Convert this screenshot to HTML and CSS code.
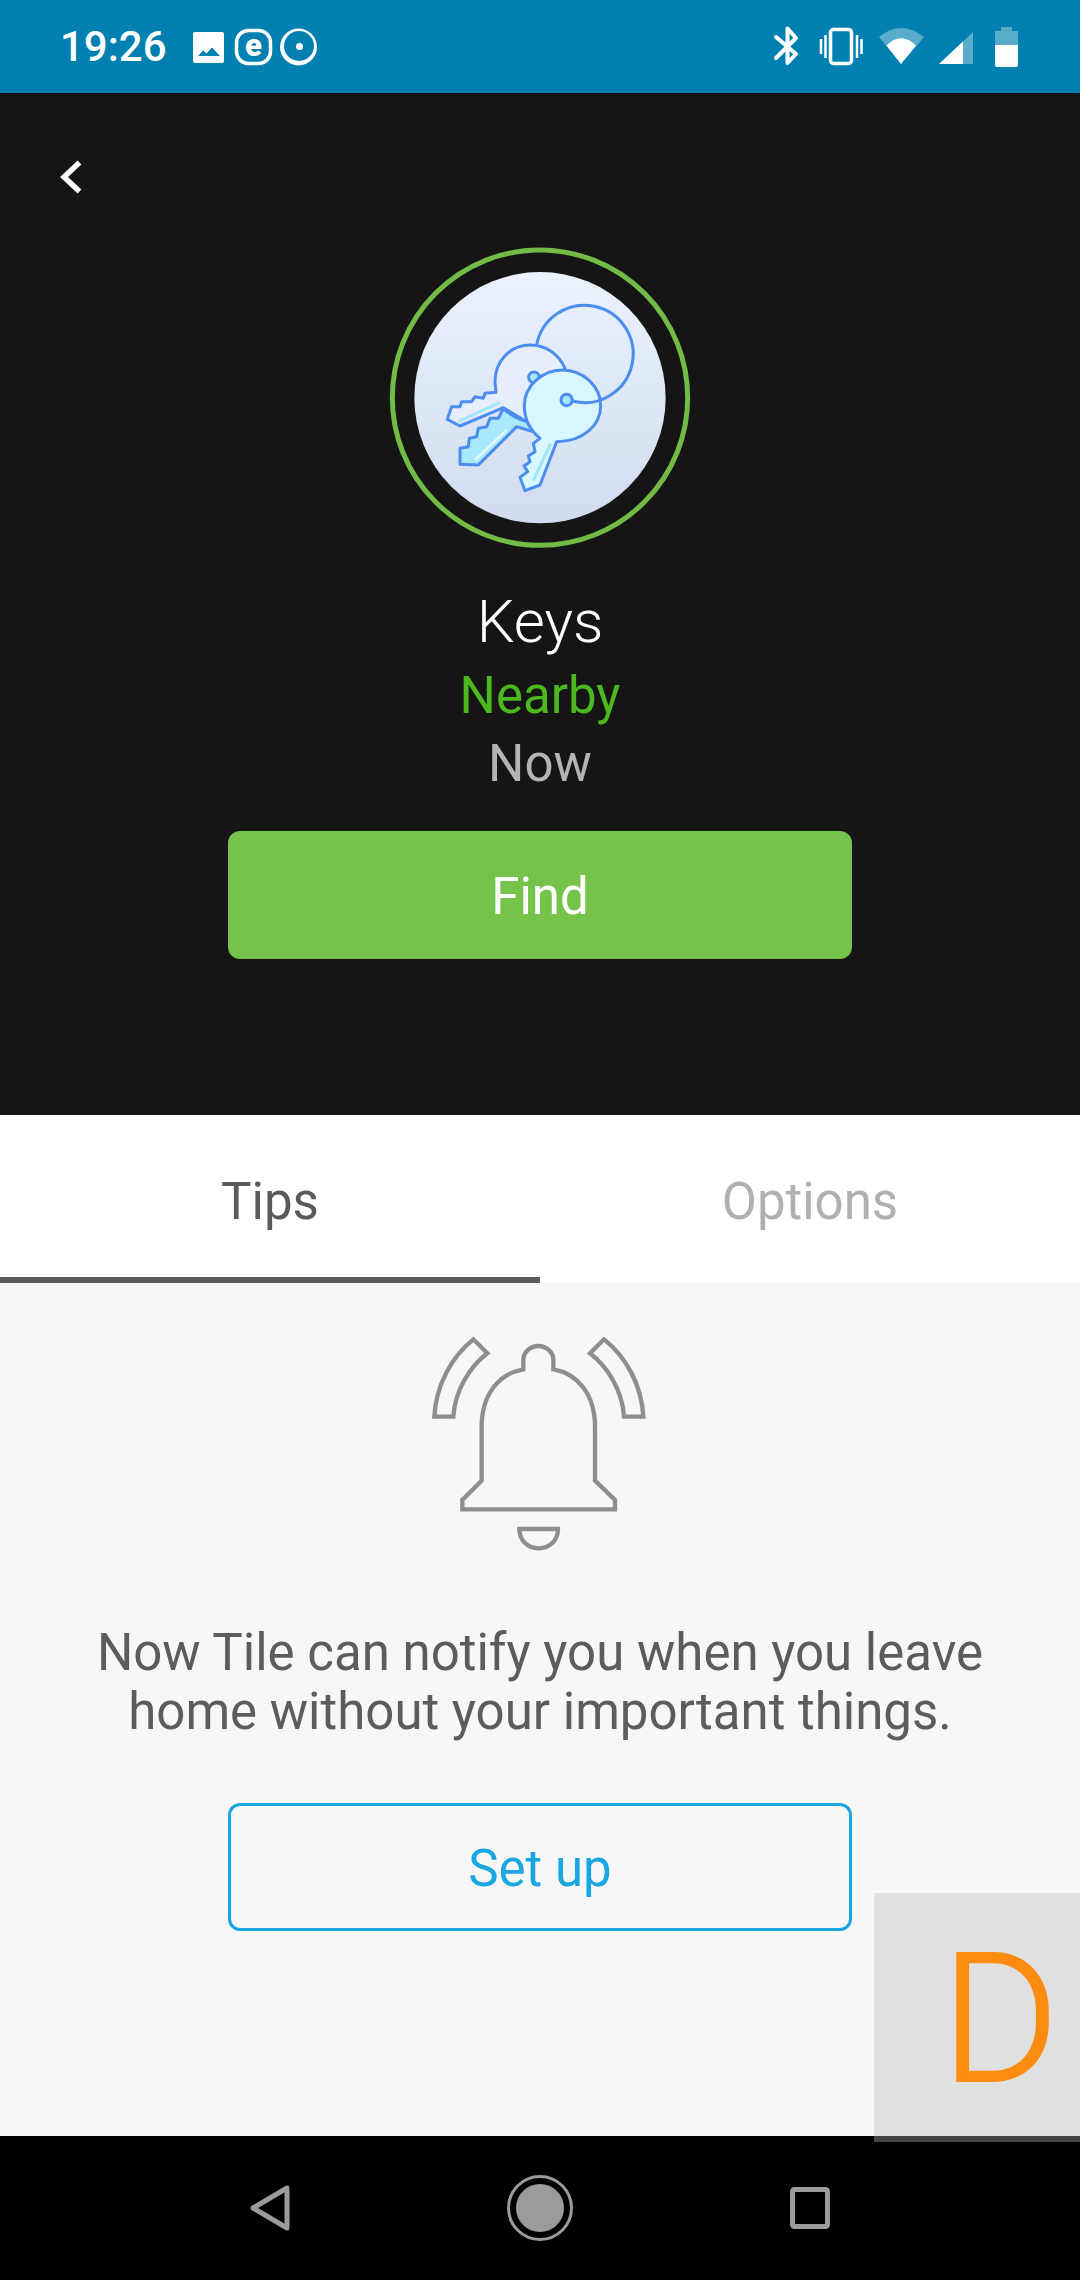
FILE: index.html
```html
<!DOCTYPE html>
<html lang="en">
<head>
  <meta charset="UTF-8">
  <title>Keys</title>
  <link rel="stylesheet" href="styles.css">
</head>

<body>
  <div class="screen">
    <!-- Android status bar -->
    <div class="status-bar">
      <div class="status-left">
        <span class="clock">19:26</span>
        <svg class="status-icons-left" viewBox="192 26 126 40" width="126" height="40">
          <rect x="192" y="31" width="31" height="31" rx="2" fill="#fff"/>
          <path d="M197 55 L202 49.5 L205.5 52.5 L211 46.5 L219 55 Z" fill="#0080b0"/>
          <rect x="235.5" y="29.5" width="34" height="33" rx="12" fill="none" stroke="#fff" stroke-width="3.5"/>
          <text class="e-glyph" x="252.5" y="55" text-anchor="middle">e</text>
          <circle cx="297.5" cy="46" r="18.5" fill="#fff"/>
          <circle cx="298" cy="45" r="15" fill="#0080b0"/>
          <circle cx="298.5" cy="45.5" r="3.5" fill="#fff"/>
        </svg>
      </div>
      <svg class="status-icons-right" viewBox="772 26 246 42" width="246" height="42">
        <path d="M775 37 L795 54 L786.5 63 V28.5 L795 38 L775 58" fill="none" stroke="#fff" stroke-width="4" stroke-linecap="round" stroke-linejoin="round"/>
        <rect x="829.5" y="29.5" width="21" height="34" rx="3" fill="none" stroke="#fff" stroke-width="3.5"/>
        <path d="M820 39 V54 M824.5 35 V58 M856 35 V58 M860.5 39 V54" fill="none" stroke="#fff" stroke-width="2.5"/>
        <path d="M878 37 Q900 19 923 37 L900 64 Z" fill="#fff" opacity="0.35"/>
        <path d="M885.5 45.5 Q900 31 915 45.5 L900 64 Z" fill="#fff"/>
        <path d="M938 64 L972 32 V64 Z" fill="#fff" opacity="0.35"/>
        <path d="M938 64 L962 41.5 V64 Z" fill="#fff"/>
        <path d="M1000 31 V27 H1011 V31 H1017 V45 H994 V31 Z" fill="#fff" opacity="0.35"/>
        <path d="M994 45 H1017 V65 Q1017 67 1015 67 H996 Q994 67 994 65 Z" fill="#fff"/>
      </svg>
    </div>

    <!-- Tile header -->
    <div class="hero">
      <svg class="back" viewBox="0 0 22 34" width="22" height="34">
        <path d="M19.5 2.5 L4 17 L19.5 31.5" fill="none" stroke="#fff" stroke-width="5.5"/>
      </svg>
      <div class="hero-center">
        <svg class="avatar" viewBox="0 0 1020 1020" width="340" height="340">
          <defs>
            <linearGradient id="disc" x1="0" y1="0" x2="0" y2="1">
              <stop offset="0" stop-color="#ebf2fe"/>
              <stop offset="1" stop-color="#d0dcef"/>
            </linearGradient>
          </defs>
          <circle cx="510" cy="503" r="443" fill="none" stroke="#72bb47" stroke-width="15"/>
          <circle cx="510" cy="503" r="377" fill="url(#disc)"/>
          <g stroke="#4c8df0" stroke-width="9" stroke-linejoin="round">
            <!-- back key -->
            <path d="M585 415 C565 370 525 345 480 345 C420 345 375 395 375 455 L378 487 L345 490 L340 505 L315 500 L305 515 L275 515 L270 530 L245 530 L232 568 L270 588 L400 533 L470 575 L560 500 Z" fill="#e6eefb"/>
            <path d="M265 575 L390 517" fill="none" stroke="#a6e6fa" stroke-width="9"/>
            <!-- middle key -->
            <path d="M400 535 L385 565 L360 565 L350 590 L325 595 L320 620 L298 625 L295 650 L270 655 L270 703 L325 705 L440 590 L495 607 L470 575 C440 565 415 550 400 535 Z" fill="#a8e8fb"/>
            <path d="M315 690 L410 600" fill="none" stroke="#dff6fd" stroke-width="9"/>
            <circle cx="492" cy="442" r="16" fill="#a8e8fb"/>
            <!-- front key -->
            <path d="M577 420 C640 420 692 470 692 527 C692 585 640 635 560 635 L510 765 L465 782 L450 742 L473 725 L462 708 L480 695 L475 678 L495 665 L490 640 L510 625 C480 600 463 565 463 527 C463 470 515 420 577 420 Z" fill="#d8f6fd"/>
            <path d="M542 640 L490 752" fill="none" stroke="#9fe8f8" stroke-width="9"/>
            <circle cx="590" cy="510" r="17" fill="#a0e6fa"/>
            <!-- ring -->
            <path d="M500 345 A146 146 0 1 1 610 514" fill="none"/>
          </g>
        </svg>
        <div class="tile-name">Keys</div>
        <div class="tile-status">Nearby</div>
        <div class="tile-time">Now</div>
        <div class="btn btn-find">Find</div>
      </div>
    </div>

    <div class="tabs">
      <div class="tab active">Tips</div>
      <div class="tab">Options</div>
    </div>

    <div class="tips">
      <svg class="bell" viewBox="0 0 780 780" width="260" height="260">
        <g fill="none" stroke="#8e8e8e" stroke-width="13">
          <path d="M340 178 V150 A45 42 0 0 1 430 150 V178 C500 190 555 250 555 350 V512 L615 570 V598 H157 V570 L215 512 V350 C215 250 270 190 340 178 Z"/>
          <path d="M328 657 H444 C444 690 420 715 386 715 C352 715 328 690 328 657 Z"/>
          <path d="M73 320 C78 225 125 140 190 88 L232 130 C180 170 135 240 130 320 Z"/>
          <path d="M700 320 C695 225 648 140 582 88 L540 130 C592 170 637 240 642 320 Z"/>
        </g>
      </svg>
      <p class="tips-text">Now Tile can notify you when you leave<br>home without your important things.</p>
      <div class="btn btn-setup">Set up</div>
    </div>

    <!-- floating overlay in the corner -->
    <div class="float-badge"><span class="float-letter">D</span></div>

    <div class="nav-bar">
      <svg viewBox="0 0 40 46" width="40" height="46">
        <path d="M37 3 V43 L3 23 Z" fill="none" stroke="#9b9b9b" stroke-width="5" stroke-linejoin="round"/>
      </svg>
      <svg viewBox="0 0 66 66" width="66" height="66">
        <circle cx="33" cy="33" r="31.5" fill="none" stroke="#9b9b9b" stroke-width="3"/>
        <circle cx="33" cy="33" r="24" fill="#9b9b9b"/>
      </svg>
      <svg viewBox="0 0 40 42" width="40" height="42">
        <rect x="2.5" y="2.5" width="35" height="37" rx="2" fill="none" stroke="#9b9b9b" stroke-width="5"/>
      </svg>
    </div>
  </div>
</body>
</html>
```

FILE: styles.css
```css
/* Reset */
* { box-sizing: border-box; margin: 0; padding: 0; }
html, body {
  width: 1080px; height: 2280px;
  overflow: hidden;
  background: #f7f7f7;
  font-family: Roboto, "Liberation Sans", sans-serif;
}

.screen {
  position: relative;
  width: 1080px;
  height: 2280px;
  display: flex;
  flex-direction: column;
}

/* Status bar */
.status-bar {
  height: 93px;
  padding: 0 62px;
  background: #0080b0;
  display: flex;
  justify-content: space-between;
  align-items: center;
}
.status-left {
  display: flex;
  align-items: center;
  gap: 26px;
}
.clock {
  margin-left: -2px;
  color: #fff;
  font-size: 42px;
  font-weight: 500;
  line-height: 48px;
}
.status-icons-right { margin-right: -1px; }
.e-glyph {
  fill: #fff;
  font-family: Roboto, sans-serif;
  font-size: 31px;
  font-weight: 900;
}

/* Dark header */
.hero {
  height: 1022px;
  padding-top: 67px;
  background: #151515;
}
.back {
  display: block;
  margin-left: 60px;
}
.hero-center {
  display: flex;
  flex-direction: column;
  align-items: center;
}
.avatar {
  display: block;
  margin-top: 36px;
  margin-bottom: 16px;
}
.tile-name {
  color: #fff;
  font-size: 60px;
  font-weight: 300;
  line-height: 71px;
  margin-bottom: 9px;
}
.tile-status {
  color: #4cb81e;
  font-size: 51px;
  line-height: 60px;
  margin-bottom: 8px;
}
.tile-time {
  color: #b4b4b4;
  font-size: 51px;
  line-height: 60px;
  margin-bottom: 37px;
}

/* Buttons */
.btn {
  width: 624px;
  height: 128px;
  border-radius: 12px;
  font-size: 51px;
  display: flex;
  justify-content: center;
  align-items: center;
}
.btn-find {
  padding-top: 3px;
  background: #75c34a;
  color: #fff;
}
.btn-setup {
  padding-top: 2px;
  border: 3px solid #1aa7df;
  color: #1aa7df;
}

/* Tabs */
.tabs {
  height: 168px;
  background: #fff;
  display: grid;
  grid-template-columns: 1fr 1fr;
}
.tab {
  padding-top: 57px;
  font-size: 51px;
  line-height: 60px;
  text-align: center;
  color: #b0b0b0;
}
.tab.active {
  color: #5a5a5a;
  border-bottom: 6px solid #5a5a5a;
}

/* Tips panel */
.tips {
  flex: 1;
  padding-top: 27px;
  background: #f7f7f7;
  display: flex;
  flex-direction: column;
  align-items: center;
}
.bell { display: block; }
.tips-text {
  margin-top: 53px;
  margin-bottom: 62px;
  color: #5c5c5c;
  font-size: 51px;
  line-height: 59px;
  text-align: center;
}

/* Overlay in the bottom right corner */
.float-badge {
  position: absolute;
  right: 0;
  bottom: 138px;
  width: 206px;
  height: 249px;
  background: #e0e0e0;
  border-bottom: 6px solid #444;
}
.float-letter {
  position: absolute;
  left: 67px;
  top: 27px;
  color: #fb8c0f;
  -webkit-text-stroke: 2px #fb8c0f;
  font-family: Roboto, sans-serif;
  font-size: 180px;
  font-weight: 300;
  line-height: 200px;
}

/* Navigation bar */
.nav-bar {
  height: 144px;
  padding: 0 135px;
  background: #000;
  display: grid;
  grid-template-columns: repeat(3, 1fr);
  justify-items: center;
  align-items: center;
}
```
